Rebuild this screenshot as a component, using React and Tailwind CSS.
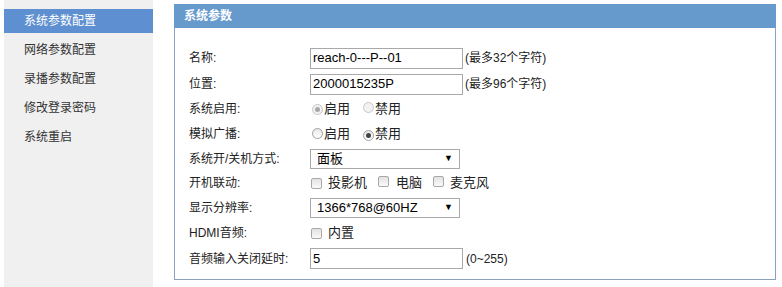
import React from "react";

const font = { fontFamily: "'Liberation Sans', 'Noto Sans CJK SC', sans-serif" };

function Radio({ checked, disabled }) {
  return (
    <span
      className={`inline-flex items-center justify-center w-[11px] h-[11px] rounded-full border ${
        disabled ? "border-[#c8c8c8] bg-[#f2f2f2]" : "border-[#a0a0a0] bg-gradient-to-b from-[#e8e8e8] to-white"
      }`}
    >
      {checked && (
        <span className={`w-[5px] h-[5px] rounded-full ${disabled ? "bg-[#a8a8a8]" : "bg-[#444]"}`} />
      )}
    </span>
  );
}

function Check() {
  return (
    <span className="inline-block w-[11px] h-[11px] rounded-[2px] border border-[#a8a8a8] bg-gradient-to-b from-[#e2e2e2] to-[#fafafa]" />
  );
}

function Row({ label, children, h = "h-[25px]" }) {
  return (
    <div className={`flex items-center ${h}`}>
      <div className="w-[121px] text-[12px] text-[#222]">{label}</div>
      <div className="flex items-center">{children}</div>
    </div>
  );
}

function TextInput({ value }) {
  return (
    <div className="w-[153px] h-[21px] border border-[#a9a9a9] bg-white flex items-center pl-[2px] text-[13px] text-black">
      {value}
    </div>
  );
}

function Select({ value }) {
  return (
    <div className="w-[150px] h-[20px] border border-[#a9a9a9] bg-white flex items-center justify-between pl-[6px] pr-[6px] text-[13px] text-black">
      <span>{value}</span>
      <span className="text-[9px] leading-none">▼</span>
    </div>
  );
}

export default function App() {
  const items = ["系统参数配置", "网络参数配置", "录播参数配置", "修改登录密码", "系统重启"];
  return (
    <div className="w-[782px] h-[287px] bg-white flex pl-[4px] overflow-hidden" style={font}>
      <div className="w-[149px] h-[287px] bg-[#f0f0f0] pt-[9px] flex flex-col gap-[5px] mt-0">
        {items.map((t, i) => (
          <div
            key={t}
            className={`h-[24px] flex items-center pl-[20px] text-[12px] ${
              i === 0 ? "bg-[#5e8fd0] text-white" : "text-[#333]"
            }`}
          >
            {t}
          </div>
        ))}
      </div>
      <div className="ml-[21px] mt-[4px] w-[602px] h-[276px] border border-t-0 border-[#8aa2bf] flex flex-col">
        <div className="h-[24px] bg-[#6699cc] flex items-center pl-[10px] -mx-px text-[12px] font-bold text-white">
          系统参数
        </div>
        <div className="pl-[14px] pt-[17px] flex flex-col">
          <Row label="名称:" h="h-[26px]">
            <TextInput value="reach-0---P--01" />
            <span className="ml-[2px] text-[12px] text-[#222]">(最多32个字符)</span>
          </Row>
          <Row label="位置:" h="h-[26px]">
            <TextInput value="2000015235P" />
            <span className="ml-[2px] text-[12px] text-[#222]">(最多96个字符)</span>
          </Row>
          <Row label="系统启用:" h="h-[24px]">
            <div className="flex items-center ml-[2px] text-[13px] text-[#222]">
              <Radio checked disabled />
              <span className="ml-[1px]">启用</span>
              <span className="ml-[13px]"><Radio disabled /></span>
              <span className="ml-[1px]">禁用</span>
            </div>
          </Row>
          <Row label="模拟广播:" h="h-[25px]">
            <div className="flex items-center ml-[2px] text-[13px] text-[#222]">
              <Radio />
              <span className="ml-[1px]">启用</span>
              <span className="ml-[13px]"><Radio checked /></span>
              <span className="ml-[1px]">禁用</span>
            </div>
          </Row>
          <Row label="系统开/关机方式:" h="h-[25px]">
            <Select value="面板" />
          </Row>
          <Row label="开机联动:" h="h-[24px]">
            <div className="flex items-center ml-[1px] text-[13px] text-[#222]">
              <Check />
              <span className="ml-[6px]">投影机</span>
              <span className="ml-[11px]"><Check /></span>
              <span className="ml-[7px]">电脑</span>
              <span className="ml-[11px]"><Check /></span>
              <span className="ml-[6px]">麦克风</span>
            </div>
          </Row>
          <Row label="显示分辨率:" h="h-[25px]">
            <Select value="1366*768@60HZ" />
          </Row>
          <Row label="HDMI音频:" h="h-[26px]">
            <div className="flex items-center ml-[1px] text-[13px] text-[#222]">
              <Check />
              <span className="ml-[6px]">内置</span>
            </div>
          </Row>
          <Row label="音频输入关闭延时:" h="h-[25px]">
            <TextInput value="5" />
            <span className="ml-[3px] text-[12px] text-[#222]">(0~255)</span>
          </Row>
        </div>
      </div>
    </div>
  );
}
